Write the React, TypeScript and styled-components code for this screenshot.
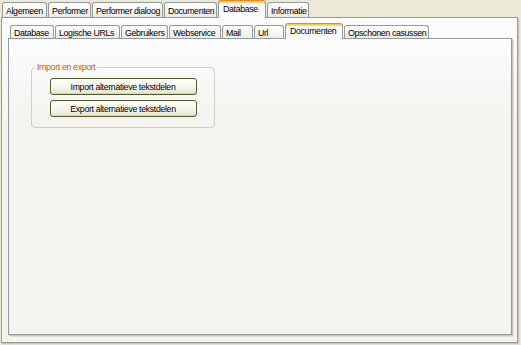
import React from "react";
import styled, { createGlobalStyle, css } from "styled-components";

const GlobalStyle = createGlobalStyle`
  html, body {
    margin: 0;
    padding: 0;
    background: #ece9d8;
  }
  body {
    font-family: "Liberation Sans", Arial, sans-serif;
    font-size: 8.8px;
    letter-spacing: -0.35px;
    color: #000;
  }
`;

const Window = styled.div`
  width: 521px;
  height: 345px;
  box-sizing: border-box;
  padding-left: 1px;
  display: flex;
  flex-direction: column;
`;

const TabStrip = styled.div<{ $inner?: boolean }>`
  display: flex;
  align-items: flex-end;
  height: ${(p) => (p.$inner ? 15 : 17)}px;
  padding-left: ${(p) => (p.$inner ? 2 : 1)}px;
  position: relative;
  z-index: 2;
`;

const Tab = styled.div<{ $w: number; $active?: boolean; $inner?: boolean }>`
  box-sizing: border-box;
  width: ${(p) => p.$w}px;
  height: ${(p) => (p.$inner ? 13 : 15)}px;
  margin-right: 1px;
  display: flex;
  align-items: center;
  justify-content: flex-start;
  padding-left: 3px;
  overflow: hidden;
  white-space: nowrap;
  border: 1px solid #919b9c;
  border-bottom: none;
  border-radius: 3px 3px 0 0;
  background: linear-gradient(#ffffff, #f7f6f1 50%, #ecebe5);
  padding-top: 1px;
  ${(p) =>
    p.$active &&
    css`
      height: ${p.$inner ? 16 : 18}px;
      margin-bottom: -1px;
      padding-top: 0;
      padding-left: 4px;
      padding-bottom: 2px;
      border-top: 1px solid #e68b2c;
      box-shadow: inset 0 1px 0 #ffc73c, inset 0 2px 0 #fbd98a;
      background: #fcfcfe;
      position: relative;
      z-index: 3;
    `}
`;

const OuterPanel = styled.div`
  box-sizing: border-box;
  width: 517px;
  height: 326px;
  border: 1px solid #919b9c;
  box-shadow: 1px 1px 0 #c9c7ba, 2px 2px 0 #e2e0d2;
  background: linear-gradient(#fcfcfe, #f4f3ee 35%);
  padding: 5px 5px 7px 6px;
  display: flex;
  flex-direction: column;
`;

const InnerPanel = styled.div`
  flex: 1;
  box-sizing: border-box;
  border: 1px solid #919b9c;
  box-shadow: 1px 1px 0 #c9c7ba, 2px 2px 0 #e2e0d2;
  background: linear-gradient(#fcfcfe, #f4f3ee 30%);
  padding: 23px 0 0 22px;
`;

const GroupBox = styled.fieldset`
  box-sizing: border-box;
  width: 184px;
  margin: 0;
  min-width: 0;
  padding: 6px 0 10px 0;
  border: 1px solid #d0d0bf;
  border-radius: 4px;
  display: flex;
  flex-direction: column;
  align-items: center;
  gap: 5px;
`;

const Legend = styled.legend`
  margin-left: 3px;
  padding: 0 2px;
  line-height: 10px;
  color: #c25e12;
`;

const Button = styled.button`
  box-sizing: border-box;
  width: 147px;
  height: 17px;
  padding: 0;
  font-family: inherit;
  font-size: inherit;
  letter-spacing: inherit;
  color: #000;
  border: 1px solid #4f5e2a;
  border-radius: 3px;
  background: linear-gradient(#fffffa, #f6f5ec 55%, #e6e3d1);
  box-shadow: inset 0 -1px 0 #d8d3ba, inset 1px 0 0 #fbfbf4;
  display: flex;
  align-items: center;
  justify-content: center;
`;

const outerTabs = [
  { label: "Algemeen", w: 45 },
  { label: "Performer", w: 43 },
  { label: "Performer dialoog", w: 71 },
  { label: "Documenten", w: 53 },
  { label: "Database", w: 48, active: true },
  { label: "Informatie", w: 42 },
];

const innerTabs = [
  { label: "Database", w: 44 },
  { label: "Logische URLs", w: 65 },
  { label: "Gebruikers", w: 47 },
  { label: "Webservice", w: 52 },
  { label: "Mail", w: 31 },
  { label: "Url", w: 30 },
  { label: "Documenten", w: 58, active: true },
  { label: "Opschonen casussen", w: 85 },
];

export default function App() {
  return (
    <>
      <GlobalStyle />
      <Window>
        <TabStrip>
          {outerTabs.map((t) => (
            <Tab key={t.label} $w={t.w} $active={t.active}>
              {t.label}
            </Tab>
          ))}
        </TabStrip>
        <OuterPanel>
          <TabStrip $inner>
            {innerTabs.map((t) => (
              <Tab key={t.label} $w={t.w} $active={t.active} $inner>
                {t.label}
              </Tab>
            ))}
          </TabStrip>
          <InnerPanel>
            <GroupBox>
              <Legend>Import en export</Legend>
              <Button>Import alternatieve tekstdelen</Button>
              <Button>Export alternatieve tekstdelen</Button>
            </GroupBox>
          </InnerPanel>
        </OuterPanel>
      </Window>
    </>
  );
}
